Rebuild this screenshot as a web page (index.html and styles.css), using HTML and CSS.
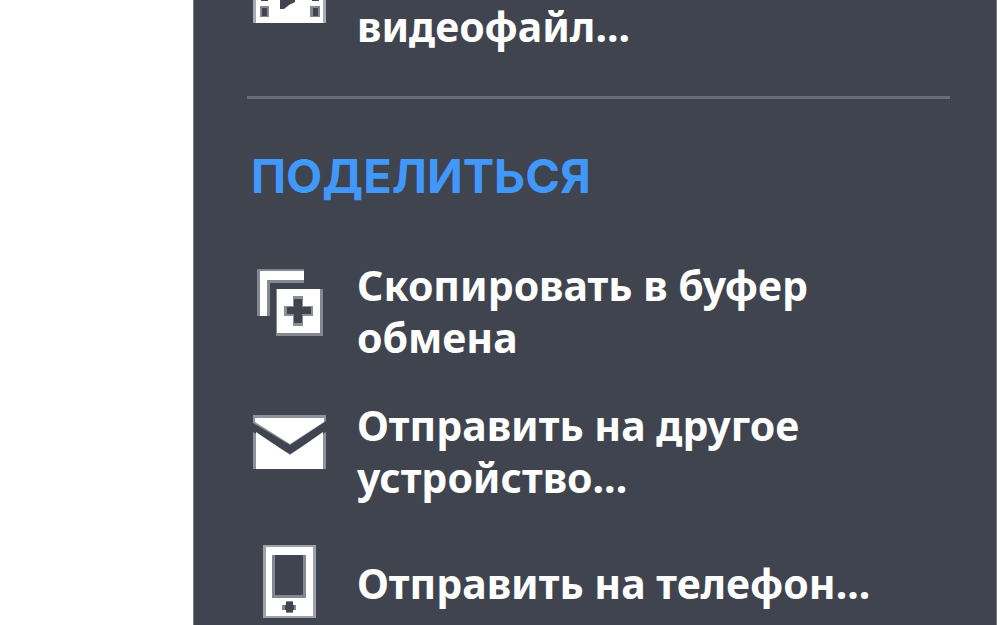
FILE: index.html
```html
<!DOCTYPE html>
<html lang="ru">
<head>
<meta charset="utf-8">
<title>Поделиться</title>
<link rel="stylesheet" href="styles.css">
</head>
<body>
<main class="panel">
  <button class="item item-video" type="button">
    <svg class="icon" width="76" height="24" viewBox="0 0 76 24" aria-hidden="true">
      <path fill="#a9abb3" d="M0 0h73v23H0z"/>
      <path fill="#fff" d="M3 0h67v23H3z"/>
      <path fill="#85888f" d="M7 6h9v11H7zM57 6h10v11H57z"/>
      <path fill="#3f444f" d="M9 8h5v8H9zM60 8h5v8h-5zM8 0h7v1H8zM59 0h7v1h-7zM27 0h15v2l-6 3-5 4h-4z"/>
    </svg>
    <span class="label">видеофайл...</span>
  </button>
  <hr class="divider">
  <h2 class="heading">ПОДЕЛИТЬСЯ</h2>
  <div class="list">
    <button class="item" type="button">
      <svg class="icon" width="76" height="76" viewBox="0 0 76 76" aria-hidden="true">
        <path fill="#858891" d="M4 6h47v14H17v33H4z"/>
        <path fill="#fff" d="M7 8h44v9H14v36H7z"/>
        <path fill="#858891" d="M23 26h47v47H23z"/>
        <path fill="#fff" d="M24 26h43v44H24z"/>
        <path fill="#8b8e96" d="M40 33h10v10h10v10H50v10H40V53H31V43h9z"/>
        <path fill="#3f444f" d="M41 36h8v8h9v7h-9v9h-8v-9h-7v-7h7z"/>
      </svg>
      <span class="label">Скопировать в буфер<br>обмена</span>
    </button>
    <button class="item" type="button">
      <svg class="icon" width="76" height="76" viewBox="0 0 76 76" aria-hidden="true">
        <path fill="#8f929a" d="M0 12h73v6L37 42 0 20zM0 29l37 22 36-22v37H0z"/>
        <path fill="#fff" d="M2 15h69v4L37 41 2 19zM3 29l34 23 33-23v37H3z"/>
      </svg>
      <span class="label">Отправить на другое<br>устройство...</span>
    </button>
    <button class="item item-phone" type="button">
      <svg class="icon" width="76" height="76" viewBox="0 0 76 76" aria-hidden="true">
        <path fill="#a0a2aa" d="M10 2h53v73H10z"/>
        <path fill="#fff" d="M13 4h47v69H13z"/>
        <path fill="#858891" d="M19 12h34v43H19z"/>
        <path fill="#3f444f" d="M22 12h28v40H22z"/>
        <path fill="#858891" d="M33 58h7v4h3v5h-3v3h-7v-3h-4v-5h4z"/>
        <path fill="#3f444f" d="M33 59h7v3h1v5h-1v2h-7v-2h-1v-5h1z"/>
      </svg>
      <span class="label">Отправить на телефон...</span>
    </button>
  </div>
</main>
</body>
</html>
```
FILE: styles.css
```css
body {
  margin: 0;
  background: #fff;
  overflow: hidden;
}

.panel {
  box-sizing: border-box;
  min-height: 100vh;
  margin: 0 3px 0 193px;
  padding: 0 46px 0 53px;
  border: solid #777983;
  border-width: 0 1px;
  background: #3f444f;
}

.item {
  display: flex;
  align-items: flex-start;
  gap: 28px;
  width: 100%;
  margin: 0;
  padding: 0 0 0 6px;
  border: 0;
  background: none;
  color: #fff;
  font: bold 41px/52px "Noto Sans", sans-serif;
  text-align: left;
}

.item-phone {
  align-items: center;
  margin-top: 4px;
}

.icon {
  flex: none;
}

.list .icon {
  margin-top: 4px;
}

.item-phone .label {
  padding-top: 4px;
}

.list .item-phone .icon {
  margin-top: 0;
}

.label {
  white-space: nowrap;
}

.divider {
  height: 3px;
  margin: 44px 0 0;
  border: 0;
  background: #686e79;
}

.heading {
  margin: 51px 0 0 4px;
  color: #4298fa;
  font: bold 47px/52px Inter, sans-serif;
}

.list {
  display: flex;
  flex-direction: column;
  gap: 36px;
  margin-top: 57px;
}
```
